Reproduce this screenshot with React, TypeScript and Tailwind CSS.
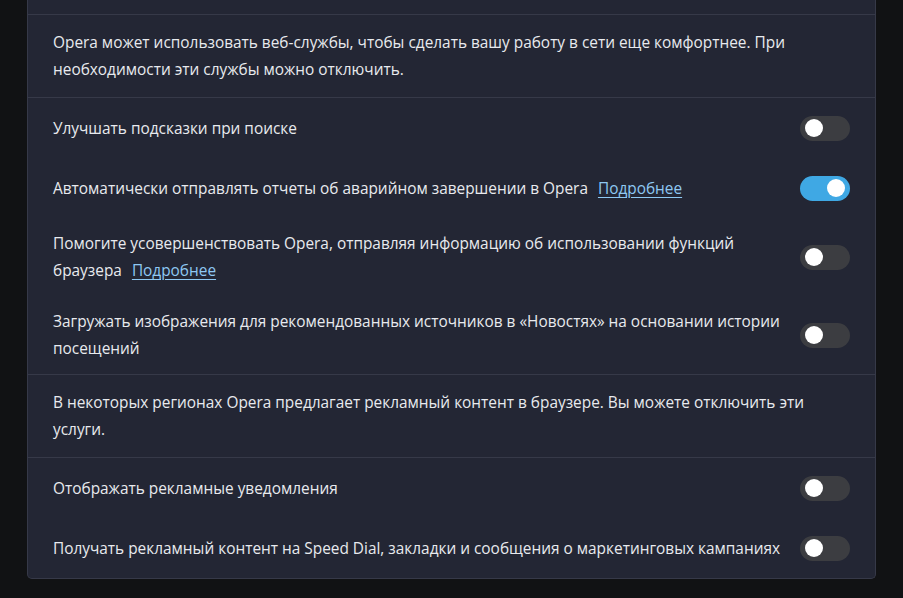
import { useState } from 'react'

// ─── TOGGLE ───────────────────────────────────────────────────────────────────

function Toggle({ initial = false }: { initial?: boolean }) {
  const [on, setOn] = useState(initial)
  return (
    <button
      onClick={() => setOn(!on)}
      className={`relative shrink-0 w-[50px] h-[25px] rounded-full transition-colors ${
        on ? 'bg-[#3fa8e4]' : 'bg-[#3c3d41]'
      }`}
    >
      <span
        className={`absolute top-[3.5px] w-[18px] h-[18px] rounded-full bg-white transition-all ${
          on ? 'left-[27px]' : 'left-[5px]'
        }`}
      />
    </button>
  )
}

function Link({ children }: { children: React.ReactNode }) {
  return (
    <a href="#" className="ml-[10px] text-[#8ec8f2] underline underline-offset-[3px]">
      {children}
    </a>
  )
}

// ─── ROWS ─────────────────────────────────────────────────────────────────────
// Line breaks are explicit, so the text never wraps on its own.

function Row({ children, on = false }: { children: React.ReactNode; on?: boolean }) {
  return (
    <div className="flex items-center justify-between gap-4 min-h-[60px] py-3">
      <div className="whitespace-nowrap">{children}</div>
      <Toggle initial={on} />
    </div>
  )
}

function Note({ children }: { children: React.ReactNode }) {
  return <div className="px-[25px] py-[14px] border-b border-[#363948] whitespace-nowrap">{children}</div>
}

export default function App() {
  return (
    <div
      className="min-h-[598px] bg-[#111214] px-[27px] text-[15.4px] leading-[27px] text-[#e8eaee]"
      style={{ fontFamily: '"Open Sans", "Noto Sans", sans-serif' }}
    >
      <div className="border border-t-0 border-[#363948] rounded-b-[5px] bg-[#232634]">
        <div className="h-[15px] border-b border-[#363948]" />

        <Note>
          Opera может использовать веб-службы, чтобы сделать вашу работу в сети еще комфортнее. При
          <br />
          необходимости эти службы можно отключить.
        </Note>

        <div className="px-[25px] border-b border-[#363948]">
          <Row>Улучшать подсказки при поиске</Row>
          <Row on>
            Автоматически отправлять отчеты об аварийном завершении в Opera
            <Link>Подробнее</Link>
          </Row>
          <Row>
            Помогите усовершенствовать Opera, отправляя информацию об использовании функций
            <br />
            браузера
            <Link>Подробнее</Link>
          </Row>
          <Row>
            Загружать изображения для рекомендованных источников в «Новостях» на основании истории
            <br />
            посещений
          </Row>
        </div>

        <Note>
          В некоторых регионах Opera предлагает рекламный контент в браузере. Вы можете отключить эти
          <br />
          услуги.
        </Note>

        <div className="px-[25px]">
          <Row>Отображать рекламные уведомления</Row>
          <Row>Получать рекламный контент на Speed Dial, закладки и сообщения о маркетинговых кампаниях</Row>
        </div>
      </div>
    </div>
  )
}
